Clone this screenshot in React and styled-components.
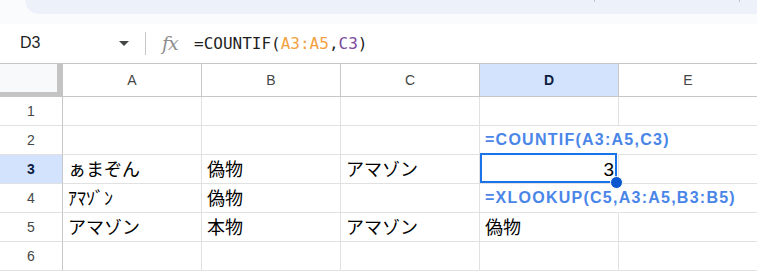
import React from "react";
import styled, { createGlobalStyle, css } from "styled-components";

const Global = createGlobalStyle`
  html, body { margin: 0; padding: 0; background: #ffffff; overflow: hidden; }
  body { font-family: "Liberation Sans", Arial, "Noto Sans CJK JP", sans-serif; }
  * { box-sizing: border-box; }
`;

const Page = styled.div`
  width: 757px;
  height: 271px;
  display: flex;
  flex-direction: column;
  overflow: hidden;
`;

const TopStrip = styled.div`
  height: 24px;
  background: #f9fbfd;
  padding-left: 25px;
`;

const ToolbarBox = styled.div`
  height: 14px;
  background: #edf2fa;
  border-bottom-left-radius: 16px;
  display: flex;
  justify-content: flex-end;
  padding-right: 17px;
  gap: 144px;
`;

const ToolbarSep = styled.span`
  width: 1px;
  height: 2px;
  background: #c4c7c5;
`;

const FormulaBar = styled.div`
  height: 41px;
  display: flex;
  align-items: center;
  border-bottom: 1px solid #c7c7c7;
`;

const NameBox = styled.div`
  width: 145px;
  display: flex;
  align-items: center;
  justify-content: space-between;
  padding: 0 16px 0 20px;
  font-size: 16px;
  color: #1f1f1f;
`;

const Caret = styled.span`
  width: 0;
  height: 0;
  border-left: 5px solid transparent;
  border-right: 5px solid transparent;
  border-top: 5px solid #444746;
`;

const Divider = styled.span`
  width: 1px;
  height: 23px;
  background: #c7c7c7;
`;

const FxIcon = styled.span`
  margin-left: 16px;
  width: 32px;
  font-family: "DejaVu Serif", "Liberation Serif", serif;
  font-style: italic;
  font-size: 19px;
  color: #8e8e8e;
  letter-spacing: -1px;
`;

const FormulaText = styled.div`
  font-family: "DejaVu Sans Mono", "Liberation Mono", monospace;
  font-size: 16px;
  color: #1f1f1f;
  white-space: pre;
`;

const Ref = styled.span`
  color: ${(p) => p.$color};
`;

const Grid = styled.div`
  display: grid;
  grid-template-columns: 63px repeat(5, 139px);
  grid-template-rows: 33px repeat(6, 29px);
`;

const Corner = styled.div`
  background: #f8f9fa;
  border-right: 6px solid #c4c4c4;
  border-bottom: 5px solid #c4c4c4;
`;

const ColHead = styled.div`
  display: flex;
  align-items: center;
  justify-content: center;
  font-size: 14px;
  color: #444746;
  border-right: 1px solid #c7c7c7;
  border-bottom: 1px solid #c7c7c7;
  ${(p) =>
    p.$active &&
    css`
      background: #d3e3fd;
      color: #0b1d3f;
      font-weight: bold;
    `}
`;

const RowHead = styled.div`
  display: flex;
  align-items: center;
  justify-content: center;
  font-size: 14px;
  color: #444746;
  border-right: 1px solid #c7c7c7;
  border-bottom: 1px solid #e1e1e1;
  ${(p) =>
    p.$active &&
    css`
      background: #d3e3fd;
      color: #0b1d3f;
      font-weight: bold;
    `}
`;

const Cell = styled.div`
  position: relative;
  display: flex;
  align-items: flex-end;
  justify-content: ${(p) => (p.$num ? "flex-end" : "flex-start")};
  padding: 0 4px 2px 5px;
  border-right: 1px solid ${(p) => (p.$spill ? "transparent" : "#e1e1e1")};
  border-bottom: 1px solid #e1e1e1;
  font-size: ${(p) => (p.$num ? "19px" : "18px")};
  line-height: 22px;
  color: #000;
  white-space: nowrap;
  ${(p) =>
    p.$formula &&
    css`
      font-weight: bold;
      font-size: 16px;
      letter-spacing: 1.25px;
      color: #4a86e8;
      padding-left: 5px;
      padding-bottom: 3px;
      z-index: 1;
    `}
`;

const Selection = styled.div`
  position: absolute;
  top: -2px;
  left: 0;
  right: 1px;
  bottom: 0;
  border: 2px solid #1a73e8;
  pointer-events: none;
  z-index: 2;
`;

const Handle = styled.div`
  position: absolute;
  right: -8px;
  bottom: -8px;
  width: 13px;
  height: 13px;
  border-radius: 50%;
  background: #0b57d0;
  border: 1px solid #ffffff;
  z-index: 3;
`;

const COLS = ["A", "B", "C", "D", "E"];

const DATA = {
  2: { D: { text: "=COUNTIF(A3:A5,C3)", formula: true } },
  3: {
    A: { text: "ぁまぞん" },
    B: { text: "偽物" },
    C: { text: "アマゾン" },
    D: { text: "3", num: true, selected: true },
  },
  4: {
    A: { text: "ｱﾏｿﾞﾝ" },
    B: { text: "偽物" },
    D: { text: "=XLOOKUP(C5,A3:A5,B3:B5)", formula: true },
  },
  5: {
    A: { text: "アマゾン" },
    B: { text: "本物" },
    C: { text: "アマゾン" },
    D: { text: "偽物" },
  },
};

export default function App() {
  return (
    <Page>
      <Global />
      <TopStrip>
        <ToolbarBox>
          <ToolbarSep />
          <ToolbarSep />
        </ToolbarBox>
      </TopStrip>
      <FormulaBar>
        <NameBox>
          <span>D3</span>
          <Caret />
        </NameBox>
        <Divider />
        <FxIcon>fx</FxIcon>
        <FormulaText>
          =COUNTIF(<Ref $color="#f2a141">A3:A5</Ref>,<Ref $color="#7b4a9e">C3</Ref>)
        </FormulaText>
      </FormulaBar>
      <Grid>
        <Corner />
        {COLS.map((c) => (
          <ColHead key={c} $active={c === "D"}>
            {c}
          </ColHead>
        ))}
        {[1, 2, 3, 4, 5, 6].map((r) => (
          <React.Fragment key={r}>
            <RowHead $active={r === 3}>{r}</RowHead>
            {COLS.map((c) => {
              const d = (DATA[r] || {})[c];
              return (
                <Cell
                  key={c}
                  $num={d?.num}
                  $formula={d?.formula}
                  $spill={d?.formula}
                >
                  {d?.text}
                  {d?.selected && (
                    <Selection>
                      <Handle />
                    </Selection>
                  )}
                </Cell>
              );
            })}
          </React.Fragment>
        ))}
      </Grid>
    </Page>
  );
}
